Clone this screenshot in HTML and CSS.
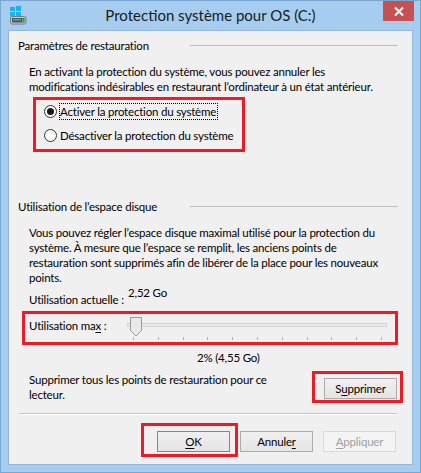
FILE: index.html
```html
<!DOCTYPE html>
<html>
<head>
<meta charset="utf-8">
<link rel="stylesheet" href="styles.css">
</head>
<body>
<div class="window">
	<div class="titlebar">
		<svg class="appicon" width="17" height="19" viewBox="0 0 17 19">
			<rect x="0" y="1" width="5" height="4" fill="#1fb2f0"/>
			<rect x="6" y="0" width="5" height="5" fill="#1fb2f0"/>
			<rect x="0" y="6" width="5" height="4" fill="#1fb2f0"/>
			<rect x="6" y="6" width="5" height="4" fill="#1fb2f0"/>
			<rect x="0.5" y="10.5" width="15.5" height="7.5" rx="1.5" fill="#c9cfd4" stroke="#6f7a82"/>
			<rect x="2" y="12" width="12.5" height="4.5" fill="#3d5566"/>
			<rect x="3" y="13" width="8" height="1.5" fill="#7a97a8"/>
			<rect x="12" y="12.5" width="1.5" height="3.5" fill="#39d24a"/>
		</svg>
		<div class="title">Protection système pour OS (C:)</div>
		<div class="close">
			<svg width="10" height="9" viewBox="0 0 10 9">
				<path d="M1 0.5 L9 8.5 M9 0.5 L1 8.5" stroke="#fff" stroke-width="2"/>
			</svg>
		</div>
	</div>

	<div class="panel">
		<div class="group-head first"><span class="group-label">Paramètres de restauration</span><div class="rule"></div></div>
		<p class="text intro">En activant la protection du système, vous pouvez annuler les<br>modifications indésirables en restaurant l’ordinateur à un état antérieur.</p>

		<div class="mark radios">
			<div class="radio"><span class="dot checked"></span><span class="focus">Activer la protection du système</span></div>
			<div class="radio"><span class="dot"></span><span class="radio-text">Désactiver la protection du système</span></div>
		</div>

		<div class="group-head second"><span class="group-label">Utilisation de l’espace disque</span><div class="rule"></div></div>
		<p class="text usage">Vous pouvez régler l’espace disque maximal utilisé pour la protection du<br>système. À mesure que l’espace se remplit, les anciens points de<br>restauration sont supprimés afin de libérer de la place pour les nouveaux<br>points.</p>

		<div class="current">
			<span class="cur-label">Utilisation actuelle :</span>
			<span class="cur-value">2,52 Go</span>
		</div>

		<div class="mark slider-box">
			<span class="slider-label">Utilisation ma<u>x</u> :</span>
			<div class="slider">
				<div class="track"></div>
				<svg class="thumb" width="12" height="20" viewBox="0 0 12 20">
					<path d="M0.5 0.5 H11.5 V13.5 L6 19 L0.5 13.5 Z" fill="#e9e9e9" stroke="#9a9a9a"/>
				</svg>
				<div class="ticks"><i></i><i></i><i></i><i></i><i></i><i></i><i></i><i></i><i></i><i></i><i></i></div>
			</div>
		</div>

		<div class="percent">2% (4,55 Go)</div>

		<div class="delete-row">
			<p class="text">Supprimer tous les points de restauration pour ce<br>lecteur.</p>
			<div class="mark del-box"><button class="btn">S<u>u</u>pprimer</button></div>
		</div>

		<div class="sep"></div>

		<div class="actions">
			<div class="mark ok-box"><button class="btn default"><u>O</u>K</button></div>
			<button class="btn">Annule<u>r</u></button>
			<button class="btn" disabled><u>A</u>ppliquer</button>
		</div>
	</div>
</div>
</body>
</html>
```

FILE: styles.css
```css
* {
	box-sizing: border-box;
}

body {
	margin: 0;
	background: #ffffff;
	font-family: "Segoe UI", Lato, "Noto Sans", sans-serif;
	font-size: 11.5px;
	letter-spacing: -0.2px;
	line-height: 15px;
	color: #000000;
	white-space: nowrap;
}

p {
	margin: 0;
}

u {
	text-decoration: underline;
	text-underline-offset: 2px;
}

.window {
	width: 421px;
	height: 473px;
	background: #a6cdf0;
	border: 1px solid #7aa6d2;
}

/* title bar */
.titlebar {
	height: 29px;
	display: grid;
	grid-template-columns: 37px 1fr 37px;
	align-items: start;
}

.appicon {
	display: block;
	margin: 5px 0 0 9px;
}

.title {
	text-align: center;
	font-size: 15px;
	letter-spacing: 0;
	line-height: 28px;
	color: #1b1b1b;
}

.close {
	width: 31px;
	height: 20px;
	background: #c75050;
	display: flex;
	align-items: center;
	justify-content: center;
}

/* main panel */
.panel {
	margin-left: 7px;
	width: 405px;
	height: 435px;
	background: #f0f0f0;
	border: 1px solid #93b8dc;
}

.group-head {
	display: flex;
	align-items: center;
	padding-left: 9px;
	padding-right: 14px;
}

.group-head.first {
	margin-top: 7px;
}

.group-head.second {
	margin-top: 47px;
}

.group-label {
	width: 172px;
	flex: none;
}

.rule {
	flex: 1;
	height: 1px;
	margin-top: -1px;
	background: #bcbcbc;
}

.text {
	padding-left: 20px;
}

.intro {
	margin-top: 11px;
}

.usage {
	margin-top: 11px;
}

/* red annotation frames */
.mark {
	border: 3px solid #ed1c24;
}

.radios {
	margin: 3px 0 0 24px;
	width: 212px;
	height: 55px;
	padding: 0 0 0 8px;
	display: flex;
	flex-direction: column;
	gap: 2px;
}

.radio {
	height: 22px;
	display: flex;
	align-items: center;
}

.dot {
	width: 13px;
	height: 13px;
	border: 1px solid #333333;
	border-radius: 50%;
	background: #ffffff;
	margin-right: 2px;
	display: flex;
	align-items: center;
	justify-content: center;
	flex: none;
}

.dot.checked::after {
	content: "";
	width: 7px;
	height: 7px;
	border-radius: 50%;
	background: #1a1a1a;
}

.focus {
	border: 1px dotted #000000;
	padding: 0 1px 0 0;
}

.radio-text {
	padding-left: 1px;
}

/* current usage */
.current {
	display: flex;
	align-items: flex-start;
	height: 22px;
	padding-left: 20px;
}

.cur-label {
	width: 99px;
	margin-top: 7px;
}

/* slider */
.slider-box {
	margin: 4px 0 0 13px;
	width: 376px;
	height: 34px;
	display: flex;
	align-items: flex-start;
}

.slider-label {
	width: 102px;
	padding-left: 4px;
	margin-top: 4px;
}

.slider {
	position: relative;
	width: 261px;
	height: 28px;
}

.track {
	margin-top: 9px;
	width: 260px;
	height: 4px;
	border: 1px solid #d6d6d6;
	background: #e7eaea;
}

.thumb {
	position: absolute;
	left: 3px;
	top: 3px;
}

.ticks {
	margin-top: 10px;
	padding: 0 6px;
	display: flex;
	justify-content: space-between;
}

.ticks i {
	width: 1px;
	height: 3px;
	background: #b0b0b0;
}

.percent {
	margin-top: 5px;
	padding-left: 188px;
}

/* delete */
.delete-row {
	margin-top: 6px;
	display: flex;
	justify-content: space-between;
	align-items: flex-start;
	padding-right: 9px;
}

.delete-row .text {
	margin-top: 1px;
}

.del-box {
	width: 91px;
	height: 32px;
	padding: 4px 0 0 9px;
}

.sep {
	margin: 10px 15px 0 10px;
	height: 2px;
	border-top: 1px solid #c4c4c4;
	border-bottom: 1px solid #ffffff;
}

/* bottom buttons */
.actions {
	margin-top: 8px;
	display: flex;
	align-items: flex-start;
	justify-content: flex-end;
	padding-right: 16px;
}

.ok-box {
	width: 97px;
	height: 34px;
	padding: 5px 0 0 13px;
	margin-right: 2px;
}

.btn {
	width: 73px;
	height: 21px;
	padding: 0;
	font-family: inherit;
	font-size: 11.5px;
	letter-spacing: -0.2px;
	color: #000000;
	border: 1px solid #acacac;
	background: linear-gradient(#f0f0f0, #e5e5e5);
	border-radius: 0;
}

.actions > .btn {
	margin-top: 8px;
	margin-left: 10px;
}

.actions > .btn:first-of-type {
	margin-left: 0;
}

.btn.default {
	border-color: #3399ff;
}

.btn:disabled {
	color: #a0a0a0;
	border-color: #d9d9d9;
	background: #f4f4f4;
}
```
